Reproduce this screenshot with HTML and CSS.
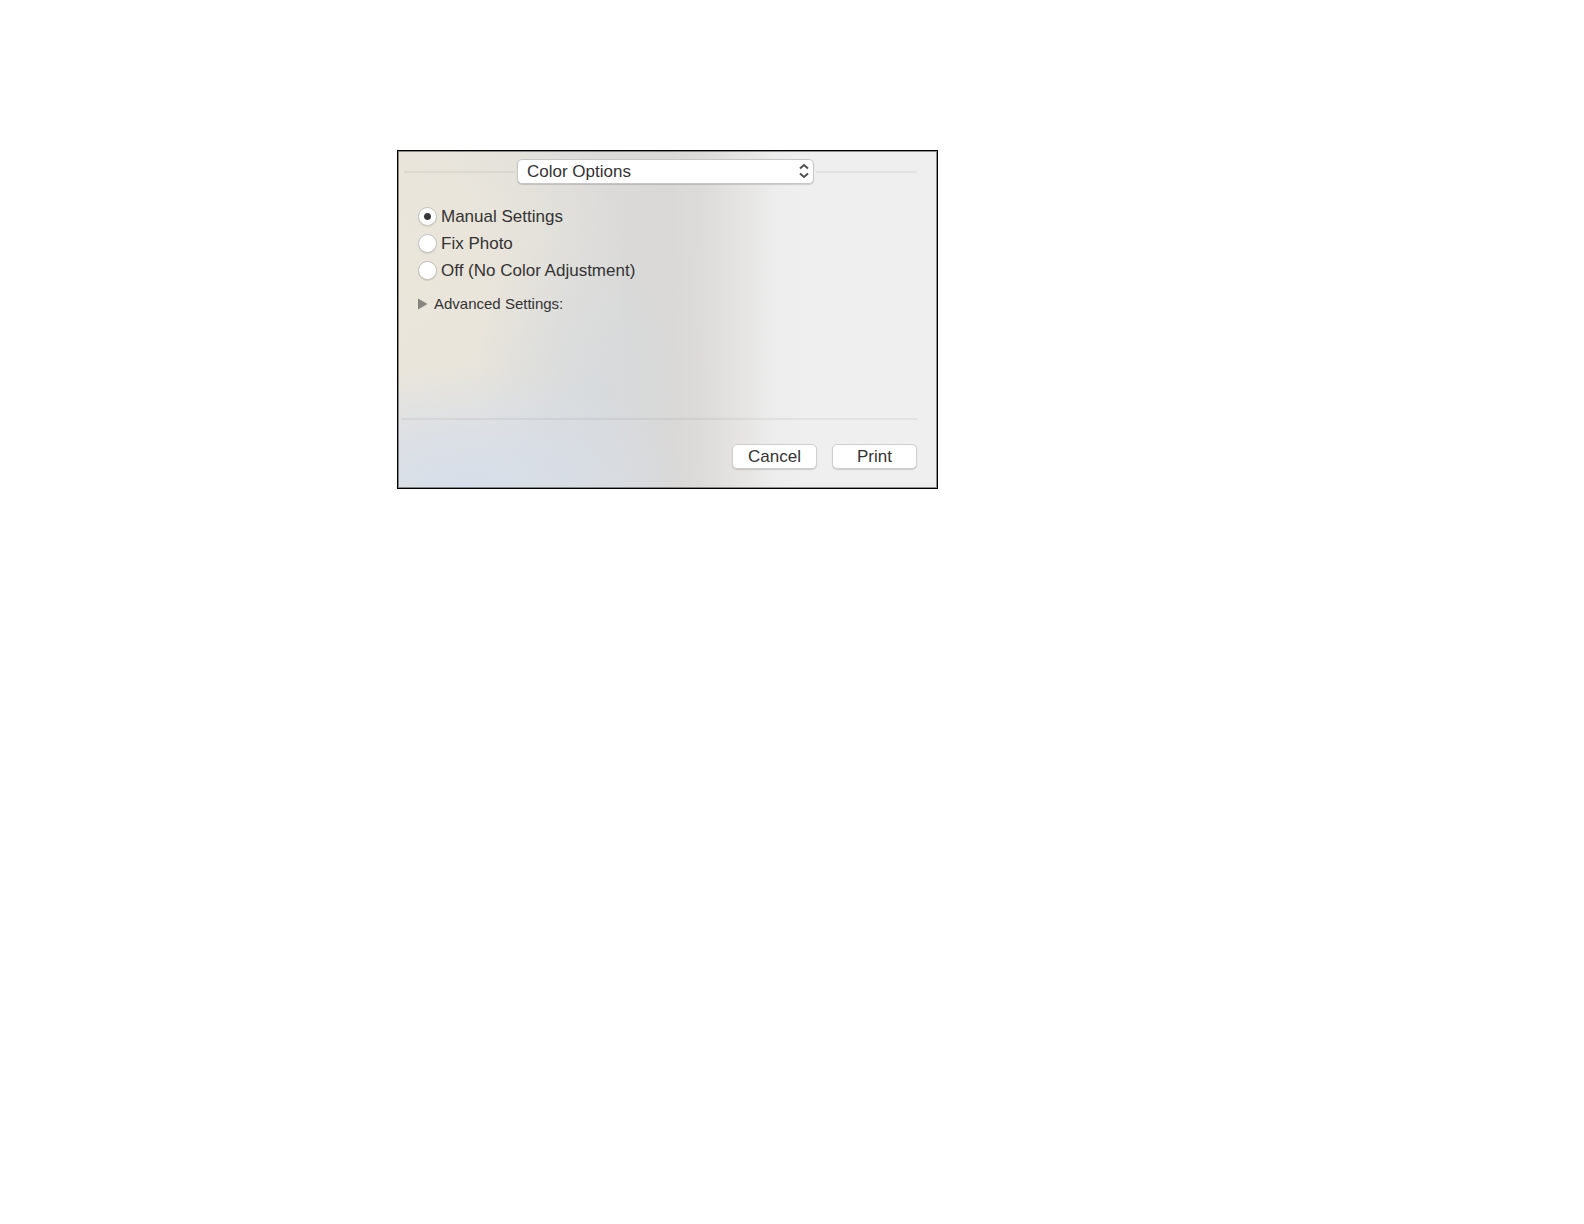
FILE: index.html
```html
<!DOCTYPE html>
<html lang="en">
<head>
<meta charset="utf-8">
<title>Print</title>
<link rel="stylesheet" href="styles.css">
</head>
<body>
<main class="page">
  <form class="dialog">
    <div class="pane-header">
      <span class="rule"></span>
      <div class="popup">
        <select class="popup-select" aria-label="Print options pane">
          <option>Color Options</option>
        </select>
        <svg class="popup-arrows" width="10" height="16" viewBox="0 0 10 16" fill="none" stroke="#505050" stroke-width="2" aria-hidden="true">
          <path d="M1 5.500 5 2l4 3.500M1 10.500 5 14l4-3.500"/>
        </svg>
      </div>
      <span class="rule"></span>
    </div>
    <div class="options">
      <label class="option"><input class="radio" type="radio" name="mode" checked>Manual Settings</label>
      <label class="option"><input class="radio" type="radio" name="mode">Fix Photo</label>
      <label class="option"><input class="radio" type="radio" name="mode">Off (No Color Adjustment)</label>
    </div>
    <details class="advanced">
      <summary class="advanced-title">
        <svg width="10" height="12" viewBox="0 0 10 12" aria-hidden="true"><path d="M0 0.500 9.500 6 0 11.500z" fill="#888581"/></svg>
        Advanced Settings:
      </summary>
    </details>
    <div class="actions">
      <button class="button" type="button">Cancel</button>
      <button class="button" type="button">Print</button>
    </div>
  </form>
</main>
</body>
</html>
```
FILE: styles.css
```css
* {
  box-sizing: border-box;
}

body {
  margin: 0;
  background: #fff;
  color: #333;
  font: 17px/27px "Liberation Sans", Arial, sans-serif;
}

.page {
  padding: 150px 24px 24px 397px;
}

.dialog {
  max-width: 541px;
  padding: 8px 20px 19px 3px;
  border: 1px solid #000;
  box-shadow: inset 0 0 0 1px rgba(0, 0, 0, 0.4);
  background:
    radial-gradient(ellipse 42% 36% at 12% 100%, #d7dee9 0%, rgba(215, 222, 233, 0.7) 45%, rgba(215, 222, 233, 0) 100%),
    radial-gradient(ellipse 22% 50% at 36% 72%, rgba(213, 218, 222, 0.7) 0%, rgba(213, 218, 222, 0) 100%),
    radial-gradient(ellipse 40% 85% at 2% 38%, #ebe6da 0%, rgba(235, 230, 218, 0.7) 45%, rgba(235, 230, 218, 0) 100%),
    linear-gradient(to right, #e4e3df 0%, #dcdcdb 30%, #dad8d6 50%, #dddcda 57%, #e6e5e4 64%, #ededed 70%, #efefef 75%);
}

.pane-header {
  display: flex;
  align-items: center;
  gap: 2px;
  padding-left: 3px;
}

.rule {
  flex: 111 1 0;
  height: 2px;
  background: rgba(0, 0, 0, 0.05);
}

.popup + .rule {
  flex-grow: 101;
}

.popup {
  position: relative;
  flex: 0 1 297px;
}

.popup-select {
  display: block;
  width: 100%;
  height: 25px;
  padding: 0 28px 0 9px;
  appearance: none;
  border: 1px solid #c8c6c4;
  border-radius: 5px;
  background: #fff;
  box-shadow: 0 1px 1px rgba(0, 0, 0, 0.15);
  color: inherit;
  font: inherit;
  line-height: 23px;
}

.popup-arrows {
  position: absolute;
  top: 4px;
  right: 5px;
  pointer-events: none;
}

.options {
  display: flex;
  flex-direction: column;
  align-items: flex-start;
  margin: 19px 0 10px 17px;
}

.option {
  display: flex;
  align-items: center;
  gap: 4px;
}

.radio {
  width: 19px;
  height: 19px;
  margin: 0;
  appearance: none;
  border: 1px solid #c4c1bc;
  border-radius: 50%;
  background: #fff;
  box-shadow: 0 1px 1px rgba(0, 0, 0, 0.1);
}

.radio:checked {
  background: radial-gradient(circle, #383838 3px, #fff 4px);
}

.advanced {
  margin-left: 17px;
  font-size: 15px;
  line-height: 20px;
}

.advanced-title {
  display: flex;
  align-items: center;
  gap: 6px;
  list-style: none;
}

.actions {
  display: flex;
  justify-content: flex-end;
  gap: 15px;
  margin-top: 104px;
  padding-top: 24px;
  border-top: 2px solid rgba(0, 0, 0, 0.05);
}

.button {
  width: 85px;
  height: 25px;
  padding: 0;
  border: 1px solid #cfcecd;
  border-radius: 5px;
  background: #fff;
  box-shadow: 0 1px 1px rgba(0, 0, 0, 0.15);
  color: inherit;
  font: inherit;
  line-height: 23px;
}
```
